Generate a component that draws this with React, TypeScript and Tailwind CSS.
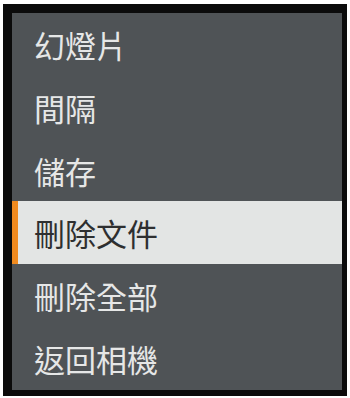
import React from 'react';

const ITEMS = ['幻燈片', '間隔', '儲存', '刪除文件', '刪除全部', '返回相機'];
const ACTIVE = 3;

export default function App() {
  return (
    <div className="w-[350px] h-[398px] bg-white pt-[4px] pl-[3px]">
      <div className="w-[344px] h-[392px] bg-[#0b0b0b] pt-[9px] pl-[9px]">
        <div
          className="w-[330px] h-[377px] bg-[#4f5356] flex flex-col"
          style={{ fontFamily: '"Noto Sans CJK TC", "Noto Sans CJK SC", sans-serif' }}
        >
          {ITEMS.map((item, i) => {
            const isActive = i === ACTIVE;
            return (
              <div
                key={item}
                className={`h-[63px] flex items-center text-[31px] leading-none ${
                  isActive
                    ? 'bg-[#e3e5e4] text-[#2e2f30] border-l-[6px] border-[#f08a1e] pl-[16px]'
                    : 'text-[#e6e7e7] pl-[22px]'
                }`}
              >
                {item}
              </div>
            );
          })}
        </div>
      </div>
    </div>
  );
}
